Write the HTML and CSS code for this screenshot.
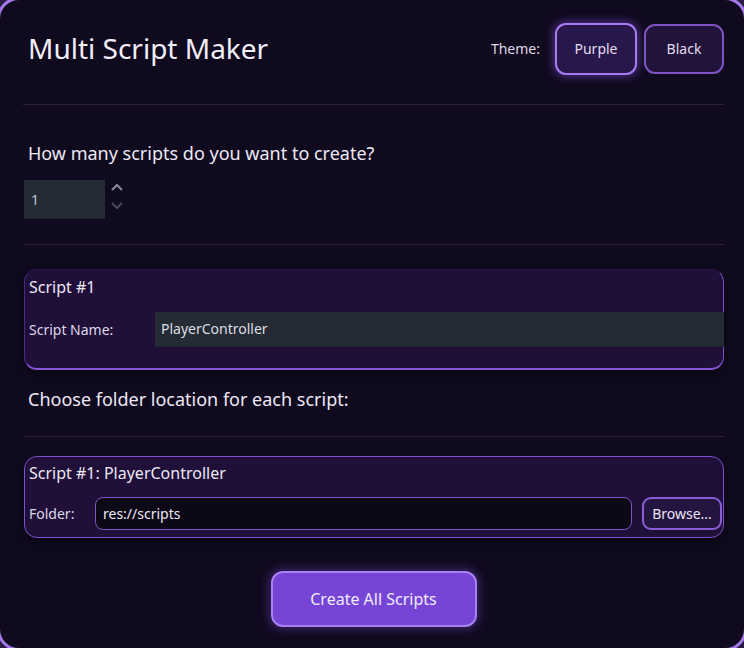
FILE: index.html
```html
<!DOCTYPE html>
<html>
<head>
<meta charset="utf-8">
<link rel="stylesheet" href="styles.css">
</head>
<body>
<div class="window">
  <header class="top">
    <h1 class="title">Multi Script Maker</h1>
    <div class="theme">
      <span class="theme-label">Theme:</span>
      <button class="theme-btn active">Purple</button>
      <button class="theme-btn">Black</button>
    </div>
  </header>
  <div class="sep sep-top"></div>
  <p class="question">How many scripts do you want to create?</p>
  <div class="spin">
    <div class="spin-field">1</div>
    <div class="spin-arrows">
      <svg width="14" height="8" viewBox="0 0 14 8"><path d="M2 7 L7 2 L12 7" fill="none" stroke="#8d8a99" stroke-width="2"/></svg>
      <svg width="14" height="8" viewBox="0 0 14 8"><path d="M2 1 L7 6 L12 1" fill="none" stroke="#4b4758" stroke-width="2"/></svg>
    </div>
  </div>
  <div class="sep sep-mid"></div>
  <section class="card card-name">
    <div class="card-title">Script #1</div>
    <div class="row">
      <span class="row-label name-label">Script Name:</span>
      <div class="name-field">PlayerController</div>
    </div>
  </section>
  <p class="question folder-q">Choose folder location for each script:</p>
  <div class="sep sep-folder"></div>
  <section class="card card-folder">
    <div class="card-title">Script #1: PlayerController</div>
    <div class="row folder-row">
      <span class="row-label folder-label">Folder:</span>
      <div class="folder-field">res://scripts</div>
      <button class="browse">Browse...</button>
    </div>
  </section>
  <div class="actions">
    <button class="create">Create All Scripts</button>
  </div>
</div>
</body>
</html>
```

FILE: styles.css
```css
* { box-sizing: border-box; }
html, body {
  margin: 0;
  padding: 0;
  width: 744px;
  height: 648px;
  overflow: hidden;
  background: #2a1d45;
  font-family: "Noto Sans", "Open Sans", sans-serif;
  color: #e8e4f2;
}
.window {
  margin: -3px;
  width: 750px;
  height: 654px;
  border: 3px solid #a57ae8;
  border-radius: 22px;
  background: #100a1f;
  padding: 0 20px 0 23px;
  display: flex;
  flex-direction: column;
}
button {
  font-family: inherit;
  color: inherit;
  cursor: pointer;
}
.top {
  display: flex;
  align-items: center;
  justify-content: space-between;
  height: 104px;
}
.title {
  margin: -8px 0 0 5px;
  font-weight: 400;
  font-size: 28px;
  color: #f1eef8;
}
.theme {
  display: flex;
  align-items: center;
  gap: 7px;
  margin-top: -7px;
}
.theme-label {
  font-size: 14px;
  margin-right: 8px;
  color: #ddd8ea;
}
.theme-btn {
  width: 80px;
  height: 50px;
  border-radius: 11px;
  background: #211339;
  border: 2px solid #7e53c4;
  font-size: 14px;
  color: #e2dcef;
}
.theme-btn.active {
  width: 82px;
  height: 52px;
  background: #27174a;
  border-color: #a67cf2;
  box-shadow: 0 0 8px 2px rgba(140, 90, 240, 0.45);
}
.sep {
  height: 1px;
  background: #2a2239;
  flex: none;
}
.question {
  margin: 0;
  font-size: 18px;
  color: #ece8f5;
  padding-left: 5px;
}
.sep-top + .question {
  margin-top: 36px;
  line-height: 24px;
}
.spin {
  display: flex;
  align-items: center;
  margin-top: 15px;
  margin-left: 1px;
}
.spin-field {
  width: 81px;
  height: 39px;
  background: #242b34;
  border-bottom: 1px solid #1b2027;
  font-size: 14px;
  color: #c7c9d0;
  padding-left: 7px;
  line-height: 39px;
}
.spin-arrows {
  display: flex;
  flex-direction: column;
  gap: 11px;
  margin-left: 5px;
  margin-top: -6px;
}
.spin-arrows svg { display: block; }
.sep-mid { margin-top: 25px; }
.card {
  background: #200f38;
  border: 1px solid #7c50c9;
  border-radius: 13px;
  margin-left: 1px;
  box-shadow: 0 4px 8px rgba(5, 2, 12, 0.6);
}
.card-name {
  margin-top: 24px;
  height: 101px;
  border-top-color: #2a1650;
  border-left-color: #4a2a80;
  border-bottom-width: 2px;
  border-bottom-color: #8557d6;
  padding: 6px 0 0 4px;
}
.card-title {
  font-size: 16px;
  line-height: 22px;
  color: #ece8f5;
}
.row {
  display: flex;
  align-items: center;
}
.card-name .row { margin-top: 14px; }
.row-label {
  font-size: 14px;
  color: #dcd7e8;
}
.name-label { width: 126px; }
.name-field {
  flex: 1;
  height: 35px;
  background: #242b34;
  border-bottom: 1px solid #1e232a;
  font-size: 14px;
  color: #dcdde2;
  line-height: 34px;
  padding-left: 6px;
  margin-right: -1px;
}
.folder-q {
  margin-top: 17px;
  line-height: 24px;
}
.sep-folder { margin-top: 25px; }
.card-folder {
  margin-top: 19px;
  height: 82px;
  padding: 5px 0 0 4px;
}
.folder-row {
  margin-top: 13px;
}
.folder-label { width: 66px; }
.folder-field {
  flex: 1;
  height: 33px;
  background: #0c0816;
  border: 1px solid #7d55c7;
  border-radius: 8px;
  font-size: 14px;
  color: #ece8f5;
  line-height: 31px;
  padding-left: 7px;
}
.browse {
  margin-left: 10px;
  margin-right: 1px;
  width: 80px;
  height: 33px;
  background: #241540;
  border: 2px solid #8a5ed4;
  border-radius: 9px;
  font-size: 14px;
  color: #eae5f5;
  padding: 0;
}
.actions {
  display: flex;
  justify-content: center;
  margin-top: 33px;
}
.create {
  width: 206px;
  height: 56px;
  background: #7645d6;
  border: 2px solid #a781f0;
  border-radius: 12px;
  font-size: 16px;
  color: #f1ecfc;
  box-shadow: 0 0 10px 2px rgba(130, 80, 230, 0.4);
}
```
